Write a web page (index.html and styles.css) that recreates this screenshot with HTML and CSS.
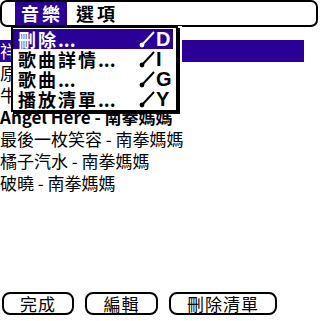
FILE: index.html
```html
<!DOCTYPE html>
<html>
<head>
<meta charset="utf-8">
<link rel="stylesheet" href="styles.css">
</head>
<body>
<div class="screen">
  <div class="list">
    <div class="row sel">祥雲 - 南拳媽媽</div>
    <div class="row">原來 - 南拳媽媽</div>
    <div class="row">牛仔很忙 - 南拳媽媽</div>
    <div class="row bold">Angel Here - 南拳媽媽</div>
    <div class="row">最後一枚笑容 - 南拳媽媽</div>
    <div class="row">橘子汽水 - 南拳媽媽</div>
    <div class="row">破曉 - 南拳媽媽</div>
  </div>
  <div class="buttons">
    <div class="btn b1">完成</div>
    <div class="btn b2">編輯</div>
    <div class="btn b3">刪除清單</div>
  </div>

  <div class="menubar">
    <div class="mtitle active">音樂</div>
    <div class="mtitle">選項</div>
  </div>
  <div class="dropdown">
    <div class="item hi"><span>刪除<i>...</i></span><span class="sc"><svg viewBox="0 0 16 18" width="16" height="18"><line x1="3" y1="15" x2="15" y2="2" stroke="currentColor" stroke-width="2"/><circle cx="3" cy="15" r="2.4" fill="currentColor"/></svg><b>D</b></span></div>
    <div class="item"><span>歌曲詳情<i>...</i></span><span class="sc"><svg viewBox="0 0 16 18" width="16" height="18"><line x1="3" y1="15" x2="15" y2="2" stroke="currentColor" stroke-width="2"/><circle cx="3" cy="15" r="2.4" fill="currentColor"/></svg><b>I</b></span></div>
    <div class="item"><span>歌曲<i>...</i></span><span class="sc"><svg viewBox="0 0 16 18" width="16" height="18"><line x1="3" y1="15" x2="15" y2="2" stroke="currentColor" stroke-width="2"/><circle cx="3" cy="15" r="2.4" fill="currentColor"/></svg><b>G</b></span></div>
    <div class="item"><span>播放清單<i>...</i></span><span class="sc"><svg viewBox="0 0 16 18" width="16" height="18"><line x1="3" y1="15" x2="15" y2="2" stroke="currentColor" stroke-width="2"/><circle cx="3" cy="15" r="2.4" fill="currentColor"/></svg><b>Y</b></span></div>
  </div>
</div>
</body>
</html>
```

FILE: styles.css
```css
* { box-sizing: border-box; }
html, body { margin: 0; padding: 0; background: #fff; }
body {
  width: 320px; height: 321px; overflow: hidden;
  font-family: "Noto Sans CJK TC", "Liberation Sans", sans-serif;
  color: #000;
}
.screen { position: relative; width: 320px; height: 321px; display: flex; flex-direction: column; }
.list { padding-top: 40px; flex: 1; }
.row {
  height: 22px; line-height: 22px; font-size: 17px; padding-left: 0; width: 304px;
  white-space: nowrap; overflow: hidden;
}
.row.sel { background: #2a0096; color: #fff; }
.row.bold { font-weight: bold; }
.buttons { display: flex; gap: 11px; padding: 0 0 6px 2px; }
.btn {
  height: 23px; border: 2px solid #000; border-radius: 8px;
  display: flex; align-items: center; justify-content: center;
  font-size: 17px; line-height: 1; letter-spacing: 1px;
}
.b1 { width: 72px; }
.b2 { width: 73px; }
.b3 { width: 108px; }

.menubar {
  position: absolute; left: 0; top: 0; width: 318px; height: 27px;
  border: 2px solid #000; border-radius: 7px; background: #fff;
  display: flex; align-items: stretch; padding: 0 0 0 13px; gap: 9px;
}
.mtitle {
  font-weight: bold; font-size: 18px; line-height: 23px; padding: 0;
  letter-spacing: 3px; white-space: nowrap; flex-shrink: 0;
}
.mtitle.active {
  background: #2a0096; color: #fff; width: 52px; padding-left: 6px;
}

.dropdown {
  position: absolute; left: 11px; top: 26px; width: 167px; height: 86px;
  background: #fff; border: 2px solid #000; padding: 1px 3px 0 0;
  box-shadow: 2px 2px 0 #000, 4px 0 0 #fff;
}
.item {
  height: 20px; display: flex; justify-content: space-between; align-items: center;
  font-weight: bold; font-size: 18px; padding: 0 2px 0 5px; letter-spacing: 2px;
  white-space: nowrap;
}
.item i { font-style: normal; letter-spacing: 0; }
.item.hi { background: #2a0096; color: #fff; }
.sc { display: flex; align-items: center; gap: 1px; letter-spacing: 0; }
.sc b { font-family: "Liberation Sans", sans-serif; font-size: 20px; font-weight: bold; width: 15px; }
```
